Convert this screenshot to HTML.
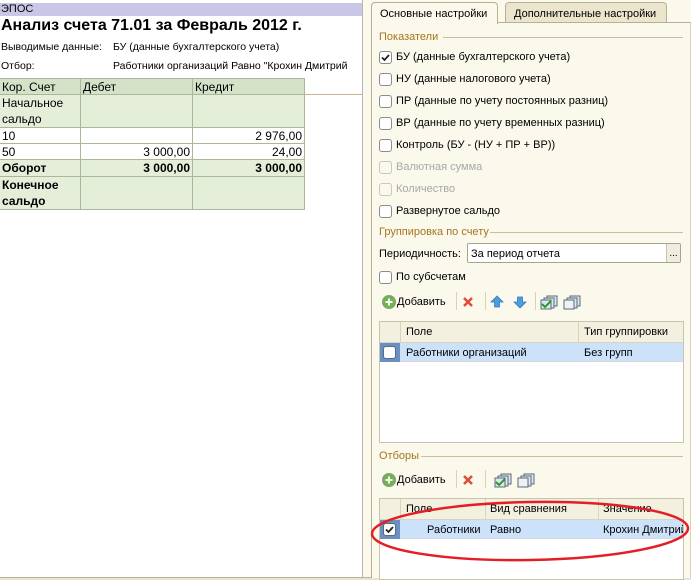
<!DOCTYPE html>
<html><head><meta charset="utf-8"><style>
*{margin:0;padding:0;box-sizing:border-box}
body{width:691px;height:580px;position:relative;overflow:hidden;background:#fbf8ec;font-family:"Liberation Sans",sans-serif;font-size:11px;color:#000}
.a{position:absolute;white-space:nowrap}
#left{position:absolute;left:0;top:0;width:363px;height:577px;background:#fff;border-right:1px solid #b8b8b8}
.c{position:absolute;border-right:1px solid #a9b79a;border-bottom:1px solid #a9b79a;font-size:12px;line-height:16px;padding:0 2px;white-space:nowrap}
.g{background:#e4eed9}.h{background:#d5e2c8}
.r{text-align:right}.b{font-weight:bold}
.cb{position:absolute;width:13px;height:13px;border:1px solid #8c8c8c;border-radius:3px;background:#fff}
.cb.d{border-color:#c8c8c0;background:#fbf8ec}
.lbl{position:absolute;font-size:11px;white-space:nowrap}
.sec{position:absolute;color:#a5761e;font-size:11px;white-space:nowrap}
.line{position:absolute;height:1px;background:#c9bf9a}
.grid{position:absolute;background:#fff;border:1px solid #c9c4ac}
.gh{position:absolute;background:#f3f0e0;border-bottom:1px solid #d8d4bd}
.vl{position:absolute;width:1px;background:#d8d4bd}
.sep{position:absolute;width:1px;height:18px;background:#d8d2b8}
</style></head><body>
<div id="left">
 <div class="a" style="left:0;top:3px;width:362px;height:13px;background:#c8c8e6;font-size:11px;line-height:13px;padding-left:1px">ЭПОС</div>
 <div class="a" style="left:1px;top:16px;font-size:16px;font-weight:bold;line-height:19px">Анализ счета 71.01 за Февраль 2012 г.</div>
 <div class="a" style="left:1px;top:41px;font-size:10.5px">Выводимые данные:</div>
 <div class="a" style="left:113px;top:41px;font-size:10.5px">БУ (данные бухгалтерского учета)</div>
 <div class="a" style="left:1px;top:60px;font-size:10.5px">Отбор:</div>
 <div class="a" style="left:113px;top:60px;font-size:10.5px">Работники организаций Равно "Крохин Дмитрий</div>
 <div class="a" style="left:304px;top:94px;width:58px;height:1px;background:#c8b48c"></div>
 <div class="c h" style="left:0;top:78px;width:81px;height:17px;border-top:1px solid #a9b79a">Кор. Счет</div>
 <div class="c h" style="left:81px;top:78px;width:112px;height:17px;border-top:1px solid #a9b79a">Дебет</div>
 <div class="c h" style="left:193px;top:78px;width:112px;height:17px;border-top:1px solid #a9b79a">Кредит</div>
 <div class="c g" style="left:0;top:95px;width:81px;height:33px">Начальное<br>сальдо</div>
 <div class="c g" style="left:81px;top:95px;width:112px;height:33px"></div>
 <div class="c g" style="left:193px;top:95px;width:112px;height:33px"></div>
 <div class="c" style="left:0;top:128px;width:81px;height:16px">10</div>
 <div class="c" style="left:81px;top:128px;width:112px;height:16px"></div>
 <div class="c r" style="left:193px;top:128px;width:112px;height:16px">2 976,00</div>
 <div class="c" style="left:0;top:144px;width:81px;height:16px">50</div>
 <div class="c r" style="left:81px;top:144px;width:112px;height:16px">3 000,00</div>
 <div class="c r" style="left:193px;top:144px;width:112px;height:16px">24,00</div>
 <div class="c g b" style="left:0;top:160px;width:81px;height:17px">Оборот</div>
 <div class="c g b r" style="left:81px;top:160px;width:112px;height:17px">3 000,00</div>
 <div class="c g b r" style="left:193px;top:160px;width:112px;height:17px">3 000,00</div>
 <div class="c g b" style="left:0;top:177px;width:81px;height:33px">Конечное<br>сальдо</div>
 <div class="c g" style="left:81px;top:177px;width:112px;height:33px"></div>
 <div class="c g" style="left:193px;top:177px;width:112px;height:33px"></div>
</div>
<div class="a" style="left:0;top:577px;width:691px;height:3px;background:#e8e4d0;border-top:1px solid #b8b39a"></div>
<div class="a" style="left:371px;top:22px;width:320px;height:556px;border-left:1px solid #b8b092;border-top:1px solid #b8b092;border-right:1px solid #d8d2b8;background:#fbf8ec"></div>
<div class="a" style="left:371px;top:2px;width:127px;height:22px;border:1px solid #b8b092;border-bottom:none;border-radius:4px 4px 0 0;background:#fbf8ec;font-size:11px;padding:5px 0 0 8px">Основные настройки</div>
<div class="a" style="left:505px;top:2px;width:162px;height:20px;border:1px solid #b8b092;border-bottom:none;border-radius:4px 4px 0 0;background:#ebe5cd;font-size:11px;padding:5px 0 0 8px">Дополнительные настройки</div>
<div class="sec" style="left:379px;top:31px">Показатели</div><div class="line" style="left:443px;top:37px;width:240px"></div>
<div class="cb" style="left:379px;top:51px"></div><svg class="a" style="left:379px;top:51px" width="13" height="13"><path d="M3 6.5l2.5 2.5 4.5-5" stroke="#222" stroke-width="1.8" fill="none"/></svg><div class="lbl" style="left:396px;top:51px">БУ (данные бухгалтерского учета)</div>
<div class="cb" style="left:379px;top:73px"></div><div class="lbl" style="left:396px;top:73px">НУ (данные налогового учета)</div>
<div class="cb" style="left:379px;top:95px"></div><div class="lbl" style="left:396px;top:95px">ПР (данные по учету постоянных разниц)</div>
<div class="cb" style="left:379px;top:117px"></div><div class="lbl" style="left:396px;top:117px">ВР (данные по учету временных разниц)</div>
<div class="cb" style="left:379px;top:139px"></div><div class="lbl" style="left:396px;top:139px">Контроль (БУ - (НУ + ПР + ВР))</div>
<div class="cb d" style="left:379px;top:161px"></div><div class="lbl" style="left:396px;top:161px;color:#a8a8a8">Валютная сумма</div>
<div class="cb d" style="left:379px;top:183px"></div><div class="lbl" style="left:396px;top:183px;color:#a8a8a8">Количество</div>
<div class="cb" style="left:379px;top:205px"></div><div class="lbl" style="left:396px;top:205px">Развернутое сальдо</div>
<div class="sec" style="left:379px;top:226px">Группировка по счету</div><div class="line" style="left:490px;top:232px;width:193px"></div>
<div class="lbl" style="left:379px;top:248px">Периодичность:</div>
<div class="a" style="left:467px;top:243px;width:214px;height:20px;border:1px solid #a8a48c;border-radius:2px;background:#fff;font-size:11px;padding:4px 0 0 3px">За период отчета</div>
<div class="a" style="left:666px;top:244px;width:14px;height:18px;background:#f0ede0;border-left:1px solid #c8c4ac;font-size:10px;text-align:center;line-height:20px">...</div>
<div class="cb" style="left:379px;top:271px"></div><div class="lbl" style="left:396px;top:271px">По субсчетам</div>
<svg class="a" style="left:381px;top:294px" width="200" height="16">
 <circle cx="8" cy="8" r="6.5" fill="#6fb54a" stroke="#8a9a80"/><path d="M8 4.5v7M4.5 8h7" stroke="#fff" stroke-width="2"/>
 <path d="M83 4l8 8M91 4l-8 8" stroke="#e04a3a" stroke-width="2.5"/>
 <path d="M116 2l-6 6h3.5v5h5v-5h3.5z" fill="#4a9ee0" stroke="#3a7ab8" stroke-width=".8"/>
 <path d="M139 14l-6-6h3.5v-5h5v5h3.5z" fill="#4a9ee0" stroke="#3a7ab8" stroke-width=".8"/>
 <rect x="166" y="2" width="10" height="10" fill="#dde6ee" stroke="#5a6a7a"/><rect x="163" y="4" width="10" height="10" fill="#dde6ee" stroke="#5a6a7a"/><rect x="160" y="6" width="10" height="9" fill="#dde6ee" stroke="#5a6a7a"/><path d="M161 10l3 3 6-6" stroke="#2a9a2a" stroke-width="2" fill="none"/>
 <rect x="189" y="2" width="10" height="10" fill="#dde6ee" stroke="#5a6a7a"/><rect x="186" y="4" width="10" height="10" fill="#dde6ee" stroke="#5a6a7a"/><rect x="183" y="6" width="10" height="9" fill="#eef2f6" stroke="#5a6a7a"/>
</svg>
<div class="lbl" style="left:397px;top:296px">Добавить</div>
<div class="sep" style="left:456px;top:292px"></div><div class="sep" style="left:485px;top:292px"></div><div class="sep" style="left:535px;top:292px"></div>
<div class="grid" style="left:379px;top:321px;width:305px;height:122px">
 <div class="gh" style="left:0;top:0;width:303px;height:21px"></div>
 <div class="vl" style="left:20px;top:0;height:40px"></div><div class="vl" style="left:198px;top:0;height:40px"></div>
 <div class="lbl" style="left:26px;top:4px">Поле</div><div class="lbl" style="left:204px;top:4px">Тип группировки</div>
 <div class="a" style="left:0;top:21px;width:303px;height:19px;background:#cce2fb;border-bottom:1px solid #d8d8d8"></div>
 <div class="a" style="left:0;top:21px;width:20px;height:19px;background:#6b8fc0"></div>
 <div class="cb" style="left:3px;top:24px;border-color:#5a6a80"></div>
 <div class="lbl" style="left:26px;top:25px">Работники организаций</div><div class="lbl" style="left:204px;top:25px">Без групп</div>
</div>
<div class="sec" style="left:379px;top:450px">Отборы</div><div class="line" style="left:421px;top:456px;width:262px"></div>
<svg class="a" style="left:381px;top:472px" width="200" height="16">
 <circle cx="8" cy="8" r="6.5" fill="#6fb54a" stroke="#8a9a80"/><path d="M8 4.5v7M4.5 8h7" stroke="#fff" stroke-width="2"/>
 <path d="M83 4l8 8M91 4l-8 8" stroke="#e04a3a" stroke-width="2.5"/>
 <rect x="120" y="2" width="10" height="10" fill="#dde6ee" stroke="#5a6a7a"/><rect x="117" y="4" width="10" height="10" fill="#dde6ee" stroke="#5a6a7a"/><rect x="114" y="6" width="10" height="9" fill="#dde6ee" stroke="#5a6a7a"/><path d="M115 10l3 3 6-6" stroke="#2a9a2a" stroke-width="2" fill="none"/>
 <rect x="143" y="2" width="10" height="10" fill="#dde6ee" stroke="#5a6a7a"/><rect x="140" y="4" width="10" height="10" fill="#dde6ee" stroke="#5a6a7a"/><rect x="137" y="6" width="10" height="9" fill="#eef2f6" stroke="#5a6a7a"/>
</svg>
<div class="lbl" style="left:397px;top:474px">Добавить</div>
<div class="sep" style="left:456px;top:470px"></div><div class="sep" style="left:485px;top:470px"></div>
<div class="grid" style="left:379px;top:498px;width:305px;height:82px">
 <div class="gh" style="left:0;top:0;width:303px;height:21px"></div>
 <div class="vl" style="left:20px;top:0;height:40px"></div><div class="vl" style="left:105px;top:0;height:40px"></div><div class="vl" style="left:218px;top:0;height:40px"></div>
 <div class="lbl" style="left:26px;top:4px">Поле</div><div class="lbl" style="left:110px;top:4px">Вид сравнения</div><div class="lbl" style="left:223px;top:4px">Значение</div>
 <div class="a" style="left:0;top:21px;width:303px;height:19px;background:#cce2fb;border-bottom:1px solid #d8d8d8"></div>
 <div class="a" style="left:0;top:21px;width:20px;height:19px;background:#6b8fc0"></div>
 <div class="cb" style="left:3px;top:24px;border-color:#5a6a80"></div><svg class="a" style="left:3px;top:24px" width="13" height="13"><path d="M3 6.5l2.5 2.5 4.5-5" stroke="#222" stroke-width="1.8" fill="none"/></svg>
 <div class="lbl" style="left:47px;top:25px">Работники</div><div class="lbl" style="left:110px;top:25px">Равно</div><div class="lbl" style="left:223px;top:25px;width:80px;overflow:hidden">Крохин Дмитрий</div>
</div>
<svg class="a" style="left:0;top:0" width="691" height="580"><ellipse cx="530" cy="531" rx="158" ry="29" fill="none" stroke="#e41e26" stroke-width="2.5" transform="rotate(-1 530 531)"/></svg>
</body></html>
